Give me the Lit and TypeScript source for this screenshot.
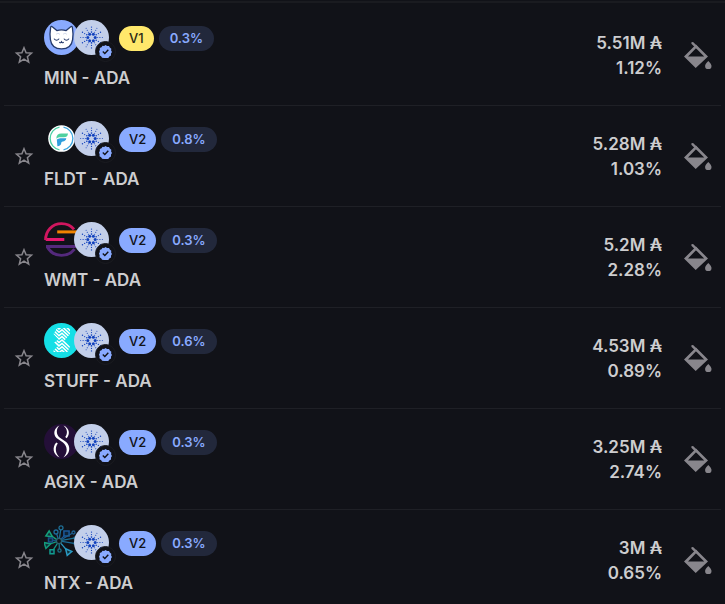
import { LitElement, html, css, svg } from "lit";
import { customElement, property, state } from "lit/decorators.js";

type Coin = "min" | "fldt" | "wmt" | "stuff" | "agix" | "ntx" | "ada";

interface Pool {
  coin: Coin;
  ticker: string;
  version: "V1" | "V2";
  fee: string;
  value: string;
  share: string;
}

const POOLS: Pool[] = [
  { coin: "min", ticker: "MIN", version: "V1", fee: "0.3%", value: "5.51M", share: "1.12%" },
  { coin: "fldt", ticker: "FLDT", version: "V2", fee: "0.8%", value: "5.28M", share: "1.03%" },
  { coin: "wmt", ticker: "WMT", version: "V2", fee: "0.3%", value: "5.2M", share: "2.28%" },
  { coin: "stuff", ticker: "STUFF", version: "V2", fee: "0.6%", value: "4.53M", share: "0.89%" },
  { coin: "agix", ticker: "AGIX", version: "V2", fee: "0.3%", value: "3.25M", share: "2.74%" },
  { coin: "ntx", ticker: "NTX", version: "V2", fee: "0.3%", value: "3M", share: "0.65%" },
];

const polar = (radius: number, degrees: number) => {
  const a = (degrees * Math.PI) / 180;
  return { x: 17.5 + radius * Math.cos(a), y: 17.5 + radius * Math.sin(a) };
};

/** Rings of the Cardano mark: orbit radius, dot radius, first angle, dot count. */
const ADA_RINGS = [
  [3.7, 1.5, 0, 6],
  [5.4, 0.8, 30, 6],
  [6.2, 0.5, 0, 6],
  [7.9, 0.6, 30, 6],
  [8.4, 0.6, 0, 6],
  [10.4, 0.7, 30, 6],
  [10.8, 0.5, 0, 6],
];

const adaLogo = svg`
  <circle cx="17.5" cy="17.5" r="17.5" fill="#c3cfea"/>
  ${ADA_RINGS.map(([orbit, dot, start, count]) =>
    Array.from({ length: count }, (_, i) => {
      const p = polar(orbit, start + (360 / count) * i);
      return svg`<circle cx=${p.x} cy=${p.y} r=${dot} fill="#1141bd"/>`;
    })
  )}`;

const minLogo = svg`
  <circle cx="17.5" cy="17.5" r="17.5" fill="#89aaff"/>
  <path d="M6.6 7.6c.2-1.600 1-1.500 2-.6l4.200 3.600c3-1 6.400-1 9.400 0l4.200-3.600c1-.9 1.800-1 2 .6.7 4 .8 8 .2 12-.8 6-5 9.300-11.100 9.300s-10.300-3.300-11.100-9.300c-.6-4-.5-8 .2-12z"
    fill="#fff" stroke="#253a6b" stroke-width="1.300" stroke-linejoin="round"/>
  <path d="M12 14.500c1.200-1.500 2.600-1.600 4 0M19 14.500c1.200-1.500 2.600-1.600 4 0" fill="none" stroke="#c9d2e6" stroke-width=".8"/>
  <path d="M10.300 19c1.200 1.600 3.300 1.600 4.500 0M20.200 19c1.200 1.600 3.300 1.600 4.500 0M15.600 22.300c.8.7 1.500.4 1.900-.5.400.9 1.100 1.200 1.900.5"
    fill="none" stroke="#253a6b" stroke-width="1.100" stroke-linecap="round"/>`;

const fldtLogo = svg`
  <circle cx="17.500" cy="17.500" r="13.300" fill="#fff"/>
  <path d="M15.500 6.200a11.500 11.500 0 0 0 0 22.600" fill="none" stroke="#49cfa4" stroke-width="1.300"/>
  <path d="M19.500 6.200a11.500 11.500 0 0 1 0 22.600" fill="none" stroke="#3aa5df" stroke-width="1.300"/>
  <path d="M12.300 17.800c0-3.500 1.800-5.300 5-5.300h6.700c-.2 2.800-1.700 3.800-4.300 3.800h-2.900c-1.800 0-3 .3-4.500 1.500z" fill="#4fd1a0"/>
  <path d="M12.800 18.600c1.500-1.200 3-1.400 5.200-1.400h4.300c-.3 2.200-1.700 3-3.400 3.200-1.300.2-1.600.8-1.700 1.900-.2 1.800-1.400 2.800-3.800 2.900z" fill="#2f9fdd"/>`;

const wmtLogo = svg`
  <path d="M1.700 17.500h18.600" stroke="#e5176f" stroke-width="3" fill="none"/>
  <path d="M1.600 18C1.500 9 8 1.600 17.500 1.600c5 0 9.500 2 12.500 5.800" stroke="#d0165f" stroke-width="2.900" fill="none"/>
  <path d="M13.200 9.900h20" stroke="#f08300" stroke-width="3" fill="none"/>
  <path d="M2 24.500h30M3.200 24.800c2.800 5.200 8 8.600 14.300 8.600 5.500 0 10-2.200 13-6.200" stroke="#54297c" stroke-width="2.900" fill="none"/>`;

const stuffLogo = svg`
  <circle cx="17.500" cy="17.500" r="17.500" fill="#15dfe6"/>
  <clipPath id="stuff"><path d="M13 5h13v6l-5.500 6.500 5.500 6-2.500 5.500h-14v-1.500l4-4-3.500-4 4.500-3-5-5.500z"/></clipPath>
  <g clip-path="url(#stuff)">
    ${Array.from({ length: 12 }, (_, i) => svg`
      <path d="M7 ${-5 + i * 3.400}l8 7.500 3-2.500 9 8.500" fill="none" stroke="#fff" stroke-width="1.500"/>`)}
  </g>`;

const agixLogo = svg`
  <circle cx="17.500" cy="17.500" r="17.500" fill="#240f38"/>
  <path d="M15.500 1.500c-5.500 2.500-6.800 8.500-3 12.500l6.500 4.600c4.500 3.700 5.200 10 .4 14.900 7-3.300 7.600-11 2.800-15.400l-6.600-4.700c-3.600-3-3.700-8.500-.1-11.900z" fill="#fff"/>
  <path d="M19.500 1.500c5.800 2.500 7 8.500 3.200 12.700l-1.500-1.100c2.700-3.700 2.400-8-1.700-11.600zM15.600 33.500c-6.600-3-7.700-10.500-3.300-15.100l1.500 1.100c-3 4-2.700 9.500 1.800 14z" fill="#fff"/>`;

/** Arms of the NTX mark: end point, head size, head shape, colour. */
const NTX_ARMS: [number, number, number, "dot" | "square" | "fan", string][] = [
  [1, 20.500, 3, "fan", "#139a7c"],
  [3.500, 8.500, 3, "fan", "#14a07c"],
  [6.500, 15, 2, "square", "#174f86"],
  [12, 7, 2, "dot", "#1d6b9a"],
  [17, 2.800, 2, "dot", "#1f6f96"],
  [22.500, 8.500, 2.600, "square", "#1a5a9b"],
  [29.500, 7.500, 1.500, "dot", "#1d5f90"],
  [31, 13, 1, "dot", "#1a6f93"],
  [31, 18.500, 1, "dot", "#1c6c98"],
  [25.500, 28.500, 3, "fan", "#2a9bc4"],
  [15.500, 25.500, 1.600, "dot", "#1d7187"],
  [8, 26.700, 2, "square", "#129b8d"],
];

const ntxLogo = svg`
  ${NTX_ARMS.map(([x, y, size, shape, colour]) => {
    const dx = x - 15;
    const dy = y - 16;
    const len = Math.hypot(dx, dy);
    const at = (along: number, side: number) =>
      `${15 + (dx * along - dy * side) / len} ${16 + (dy * along + dx * side) / len}`;
    const head =
      shape === "dot"
        ? svg`<circle cx=${x} cy=${y} r=${size} stroke=${colour} stroke-width="1.300" fill="#111218"/>`
        : shape === "square"
          ? svg`<path d="M${x - size} ${y - size}h${size * 2}v${size * 2}h${-size * 2}z" stroke=${colour} stroke-width="1.500" fill="#0f2338"/>`
          : svg`<path d="M${at(len - 6, 0)}L${at(len, size)}L${at(len, -size)}z" stroke=${colour} stroke-width="1.500" fill="#12303a"/>`;
    return svg`<path d="M${at(3, 0)}L${at(len - size, 0)}" stroke=${colour} stroke-width="1.300"/>${head}`;
  })}
  <circle cx="15" cy="16" r="2.600" fill="#111218" stroke="#2a6170" stroke-width="1.300"/>`;

const LOGOS: Record<Coin, unknown> = {
  min: minLogo,
  fldt: fldtLogo,
  wmt: wmtLogo,
  stuff: stuffLogo,
  agix: agixLogo,
  ntx: ntxLogo,
  ada: adaLogo,
};

@customElement("coin-logo")
export class CoinLogo extends LitElement {
  @property() coin: Coin = "ada";

  static styles = css`
    :host { display: block; }
    .logo { display: block; width: 35px; height: 35px; }
  `;

  render() {
    return html`<svg class="logo" viewBox="0 0 35 35" aria-hidden="true">${LOGOS[this.coin]}</svg>`;
  }
}

@customElement("pool-row")
export class PoolRow extends LitElement {
  @property({ attribute: false }) pool!: Pool;
  @state() private starred = false;

  static styles = css`
    :host { display: block; }
    .row {
      display: flex;
      align-items: center;
      padding: 15px 8px 13px;
      border-bottom: 1px solid #1f2026;
    }
    button {
      display: block;
      flex: none;
      padding: 0;
      border: 0;
      background: none;
      color: #88868c;
      cursor: pointer;
    }
    .star { padding: 0 2px; margin-right: 8px; }
    .star svg { display: block; width: 20px; height: 20px; }
    .star.on { color: #ffe86b; }
    .pair { flex: 1; min-width: 0; display: grid; gap: 10px; }
    .head { display: flex; align-items: center; gap: 10px; }
    .coins { position: relative; display: flex; }
    .second { margin-left: -5px; }
    .badge {
      position: absolute;
      right: -7px;
      bottom: -7px;
      box-sizing: border-box;
      width: 21px;
      height: 21px;
      padding: 3px;
      border: 1px solid #1b1c21;
      border-radius: 50%;
      background: #111218;
    }
    .badge svg { display: block; width: 13px; height: 13px; }
    .pills { display: flex; gap: 5px; padding-top: 2px; }
    .pill {
      padding: 0 10px;
      border-radius: 13px;
      font-size: 13px;
      font-weight: 500;
      line-height: 25px;
    }
    .v1 { background: #ffe86b; color: #2b2816; }
    .v2 { background: #89aaff; color: #111218; }
    .fee { padding: 0 11px; background: #22283b; color: #89aaff; font-weight: 600; }
    .name { font-size: 17px; font-weight: 600; line-height: 27px; }
    .stats { text-align: right; font-size: 17px; font-weight: 600; line-height: 25px; }
    .fill { margin-left: 20px; }
    .fill svg { display: block; width: 31px; height: 32px; }
  `;

  render() {
    const p = this.pool;
    return html`
      <div class="row">
        <button
          class="star ${this.starred ? "on" : ""}"
          aria-label="Favorite ${p.ticker} - ADA"
          aria-pressed=${this.starred}
          @click=${() => (this.starred = !this.starred)}
        >
          <svg viewBox="0 1 20 20" fill="none" stroke="currentColor" stroke-width="1.500">
            <path d="M10 2.700l2.100 5 5.400.4-4.100 3.600 1.300 5.400-4.700-2.900-4.700 2.900 1.300-5.400-4.100-3.600 5.400-.4z" />
          </svg>
        </button>
        <div class="pair">
          <div class="head">
            <div class="coins">
              <coin-logo .coin=${p.coin}></coin-logo>
              <coin-logo class="second" .coin=${"ada"}></coin-logo>
              <span class="badge">
                <svg viewBox="0 0 13 13" aria-hidden="true">
                  <path
                    d="M6.500 0l1.600 1 1.900-.1.800 1.700 1.500 1.100-.2 1.900.9 1.400-1 1.600v1.900l-1.700.9-1 1.600-1.900-.1L6.500 13l-1.400-.1-2-.100-1-1.600-1.600-1 .1-1.900L0 6.500l.8-1.500V3.100l1.700-.9 1-1.500 1.600.2z"
                    fill="#89aaff"
                  />
                  <path d="M3.800 6.600l2 1.900 3.500-3.700" fill="none" stroke="#111218" stroke-width="1.400" />
                </svg>
              </span>
            </div>
            <div class="pills">
              <span class="pill ${p.version.toLowerCase()}">${p.version}</span>
              <span class="pill fee">${p.fee}</span>
            </div>
          </div>
          <div class="name">${p.ticker} - ADA</div>
        </div>
        <div class="stats">
          <div>${p.value} ₳</div>
          <div>${p.share}</div>
        </div>
        <button class="fill" aria-label="Add liquidity to ${p.ticker} - ADA">
          <svg viewBox="0 1 31 32">
            <path d="M10.500 4.200l4 4" stroke="currentColor" stroke-width="2.400" stroke-linecap="round" />
            <path
              d="M14 5.500l12 12-12.300 11.500L2 17.500zM14 9.300L6 17.500h16.200z"
              fill="currentColor"
              fill-rule="evenodd"
            />
            <path d="M26.300 22c2.200 2.400 3.200 3.600 3.200 4.900a3.200 3.200 0 0 1-6.400 0c0-1.300 1-2.500 3.200-4.900z" fill="currentColor" />
          </svg>
        </button>
      </div>
    `;
  }
}

@customElement("app-root")
export class AppRoot extends LitElement {
  static styles = css`
    :host {
      display: block;
      height: 100vh;
      overflow-y: auto;
      scrollbar-width: none;
      background: #111218;
      color: #cdcdcf;
      font-family: Inter, "Liberation Sans", sans-serif;
    }
    .edge { height: 2px; border-top: 1px solid #111218; background: #1a1b20; }
    .pools { margin: 0; padding: 2px 4px 0; list-style: none; }
  `;

  render() {
    return html`
      <div class="edge"></div>
      <ul class="pools">
        ${POOLS.map((pool) => html`<li><pool-row .pool=${pool}></pool-row></li>`)}
      </ul>
    `;
  }
}
